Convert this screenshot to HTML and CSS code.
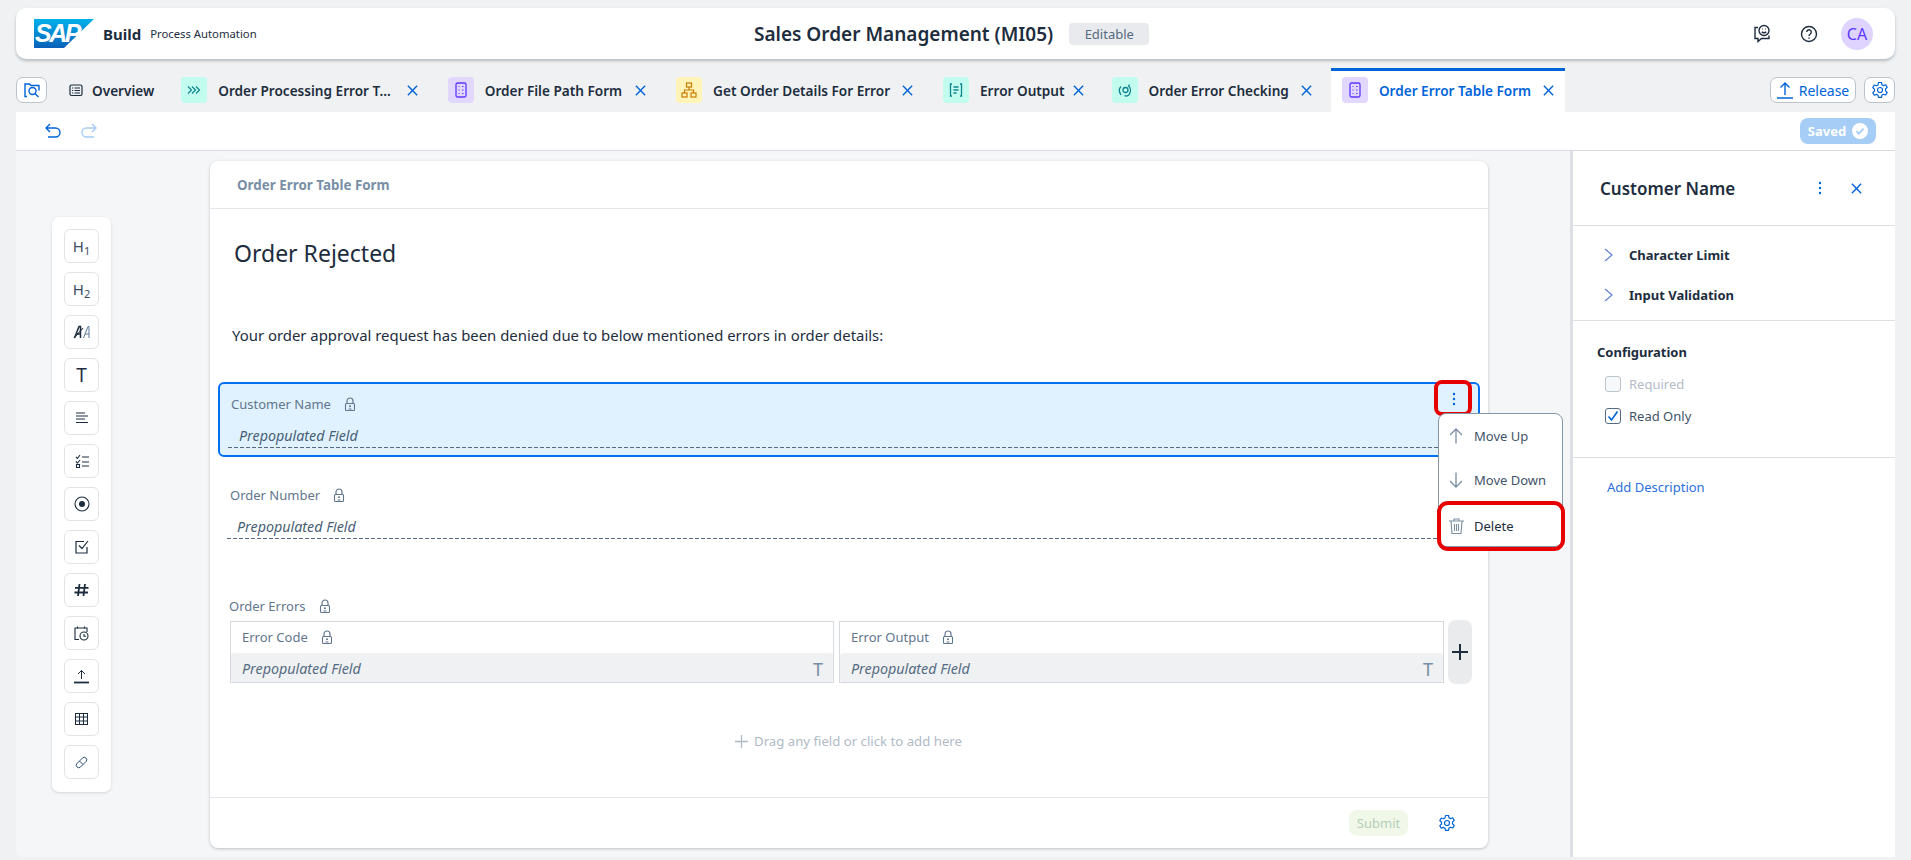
FILE: index.html
```html
<!DOCTYPE html>
<html lang="en">

<head>
    <meta charset="UTF-8">
    <title>Sales Order Management (MI05)</title>
    <link rel="stylesheet" href="styles.css">
</head>

<body>

    <!-- shared icons -->
    <svg class="icon-defs" aria-hidden="true">
        <symbol id="i-close" viewBox="0 0 14 14"><path d="M2 2l10 10M12 2L2 12" fill="none" stroke="currentColor" stroke-width="1.5"/></symbol>
        <symbol id="i-form" viewBox="0 0 26 26"><rect x="8" y="6" width="10" height="14" rx="1.5" fill="none" stroke="#5d36ff" stroke-width="1.3"/><path d="M10.5 9.5h1M14 9.5h1.500M10.500 13h1M14 13h1.500M10.500 16.500h1M14 16.500h1.500" stroke="#5d36ff" stroke-width="1.100"/></symbol>
        <symbol id="i-lock" viewBox="0 0 12 14"><path d="M3 6.500V4a3 3 0 0 1 6 0v2.500" fill="none" stroke="currentColor" stroke-width="1.200"/><rect x="1.500" y="6.500" width="9" height="7" rx="1" fill="none" stroke="currentColor" stroke-width="1.100"/><circle cx="6" cy="9.200" r="1" fill="currentColor"/><path d="M4.500 12h3" stroke="currentColor"/></symbol>
        <symbol id="i-gear" viewBox="0 0 18 18"><path d="M7.500 1.500h3l.5 2.300 1.500.8 2.200-.8 1.500 2.600-1.700 1.600v1.800l1.700 1.600-1.500 2.600-2.200-.8-1.500.8-.5 2.300h-3L7 14.200l-1.500-.8-2.200.8-1.500-2.600 1.700-1.600V8.200L1.800 6.600l1.500-2.600 2.200.8L7 4z" fill="none" stroke="currentColor" stroke-width="1.200" stroke-linejoin="round"/><circle cx="9" cy="9" r="2.500" fill="none" stroke="currentColor" stroke-width="1.200"/></symbol>
        <symbol id="i-dots" viewBox="0 0 4 14"><circle cx="2" cy="2" r="1.200" fill="currentColor"/><circle cx="2" cy="7" r="1.200" fill="currentColor"/><circle cx="2" cy="12" r="1.200" fill="currentColor"/></symbol>
        <symbol id="i-chevron" viewBox="0 0 9 14"><path d="M1 1l7 6-7 6" fill="none" stroke="currentColor" stroke-width="1.100"/></symbol>
    </svg>

    <header class="shell-bar">
        <div class="brand">
            <span class="sap-logo">
                <svg width="60" height="29" viewBox="0 0 60 29">
                    <defs>
                        <linearGradient id="sapBlue" x1="0" y1="0" x2="0" y2="1">
                            <stop offset="0" stop-color="#00b1eb"/>
                            <stop offset="1" stop-color="#0a60b8"/>
                        </linearGradient>
                    </defs>
                    <polygon points="0,0 60,0 30,29 0,29" fill="url(#sapBlue)"/>
                </svg>
                <span class="sap-logo-text">SAP</span>
            </span>
            <strong class="brand-name">Build</strong>
            <span class="brand-sub">Process Automation</span>
        </div>
        <div class="shell-title">
            <span class="project-name">Sales Order Management (MI05)</span>
            <span class="badge">Editable</span>
        </div>
        <div class="shell-actions">
            <svg class="shell-feedback" width="20" height="20" viewBox="0 0 20 20" fill="none" stroke="#1d2d3e" stroke-width="1.400"><path d="M6 3.500H3v11h3v3l3.500-3H17v-3"/><circle cx="12" cy="6.500" r="5"/><path d="M9.800 7.800c1 1.300 3.400 1.300 4.400 0"/><path d="M10.300 5h.6M13.100 5h.6"/></svg>
            <svg class="shell-help" width="18" height="18" viewBox="0 0 18 18" fill="none" stroke="#1d2d3e" stroke-width="1.400"><circle cx="9" cy="9" r="7.500"/><path d="M6.700 7a2.300 2.300 0 1 1 3.500 2c-.9.600-1.200 1-1.200 2"/><path d="M9 12.500v1.300"/></svg>
            <span class="avatar">CA</span>
        </div>
    </header>

    <nav class="tab-bar">
        <button class="btn-square search-btn">
            <svg width="18" height="18" viewBox="0 0 18 18" fill="none" stroke="#0064d9" stroke-width="1.400"><path d="M4 15.500H2V3h4.500l1.500 1.500h8v5"/><circle cx="9.500" cy="10" r="3.500"/><path d="M12 12.500l3.500 3.500"/></svg>
        </button>
        <div class="tab tab-overview">
            <svg width="14" height="14" viewBox="0 0 14 14" fill="none" stroke="#1d2d3e" stroke-width="1.200"><rect x="1" y="2" width="12" height="10.500" rx="1.500"/><path d="M3 5h1.200M5.500 5H11M3 7.500h1.200M5.500 7.500H11M3 10h1.200M5.500 10H11"/></svg>
            <span class="tab-label">Overview</span>
        </div>
        <div class="tab">
            <span class="tab-icon tab-icon-teal"><svg width="14" height="10" viewBox="0 0 14 10" fill="none" stroke="#0f828f" stroke-width="1.200"><path d="M1 1.500L4.500 5 1 8.500M5 1.500L8.500 5 5 8.500M9 1.500L12.500 5 9 8.500"/></svg></span>
            <span class="tab-label tab-label-long">Order Processing Error T...</span>
            <svg class="tab-close"><use href="#i-close"/></svg>
        </div>
        <div class="tab">
            <span class="tab-icon tab-icon-purple"><svg width="26" height="26"><use href="#i-form"/></svg></span>
            <span class="tab-label tab-label-wide">Order File Path Form</span>
            <svg class="tab-close"><use href="#i-close"/></svg>
        </div>
        <div class="tab">
            <span class="tab-icon tab-icon-yellow"><svg width="16" height="16" viewBox="0 0 16 16" fill="none" stroke="#c87b00" stroke-width="1.200"><rect x="5.500" y="1" width="5" height="4"/><rect x="1" y="11" width="5" height="4"/><rect x="10" y="11" width="5" height="4"/><path d="M8 5v3M3.500 11V8h9v3"/></svg></span>
            <span class="tab-label">Get Order Details For Error</span>
            <svg class="tab-close"><use href="#i-close"/></svg>
        </div>
        <div class="tab tab-short">
            <span class="tab-icon tab-icon-teal"><svg width="14" height="14" viewBox="0 0 14 14" fill="none" stroke="#0f828f" stroke-width="1.300"><path d="M3 1H1.500v12H3M11 1h1.500v12H11M4.500 4h5M4.500 7h5M4.500 10h3"/></svg></span>
            <span class="tab-label">Error Output</span>
            <svg class="tab-close"><use href="#i-close"/></svg>
        </div>
        <div class="tab">
            <span class="tab-icon tab-icon-teal"><svg width="14" height="14" viewBox="0 0 14 14" fill="none" stroke="#0f828f" stroke-width="1.300"><path d="M3 3.500C1 5.500 1 9 3 12M11.500 1.500l-1 1.500c2 1.500 2.500 5 1 8-1 2-3.500 2.500-5 1.500"/><circle cx="7.500" cy="7" r="2.500"/></svg></span>
            <span class="tab-label">Order Error Checking</span>
            <svg class="tab-close"><use href="#i-close"/></svg>
        </div>
        <div class="tab tab-active">
            <span class="tab-icon tab-icon-purple"><svg width="26" height="26"><use href="#i-form"/></svg></span>
            <span class="tab-label">Order Error Table Form</span>
            <svg class="tab-close"><use href="#i-close"/></svg>
        </div>
        <div class="tab-actions">
            <button class="btn-release">
                <svg width="16" height="18" viewBox="0 0 16 18" fill="none" stroke="#0064d9" stroke-width="1.400"><path d="M8 14V2M3.500 6.500L8 2l4.500 4.500M0 17h16"/></svg>
                Release
            </button>
            <button class="btn-square gear-btn"><svg width="18" height="18"><use href="#i-gear"/></svg></button>
        </div>
    </nav>

    <div class="toolbar">
        <div class="history">
            <svg width="18" height="16" viewBox="0 0 18 16" fill="none" stroke="#0064d9" stroke-width="1.400"><path d="M6 1L2 5l4 4M2 5h9.500a4.500 4.500 0 0 1 0 9H4"/></svg>
            <svg width="18" height="16" viewBox="0 0 18 16" fill="none" stroke="#a6cdf5" stroke-width="1.400"><path d="M12 1l4 4-4 4M16 5H6.500a4.500 4.500 0 0 0 0 9H14"/></svg>
        </div>
        <span class="saved">Saved
            <svg width="16" height="16" viewBox="0 0 16 16"><circle cx="8" cy="8" r="8" fill="#fff"/><path d="M4.500 8.200l2.400 2.400 4.600-5" fill="none" stroke="#a6cdf5" stroke-width="1.800"/></svg>
        </span>
    </div>

    <main class="workspace">

        <aside class="palette">
            <button class="tool"><span class="tool-h">H<sub>1</sub></span></button>
            <button class="tool"><span class="tool-h">H<sub>2</sub></span></button>
            <button class="tool">
                <svg width="18" height="14" viewBox="0 0 18 14" fill="none" stroke="#1d2d3e"><path d="M1.500 13L6 1.500h1.500V13M3 9h5" stroke-width="1.500"/><path d="M10.500 13L15 1.500h1V13M12 9h4" stroke="#5a7a9a"/><path d="M1 13L10 3" stroke-width="1.100"/></svg>
            </button>
            <button class="tool"><span class="tool-t">T</span></button>
            <button class="tool">
                <svg width="14" height="12" viewBox="0 0 14 12" stroke="#1d2d3e" stroke-width="1.100"><path d="M1 1h9M1 4h12M1 7h9M1 10.500h12"/></svg>
            </button>
            <button class="tool">
                <svg width="14" height="14" viewBox="0 0 14 14" fill="none" stroke="#1d2d3e" stroke-width="1.100"><path d="M1 3l1.500 1.500L5 1M1 7.500l1.500 1.500L5 6"/><rect x="1.500" y="10.500" width="3" height="3"/><path d="M7 3h7M7 8h7M7 12h7"/></svg>
            </button>
            <button class="tool">
                <svg width="16" height="16" viewBox="0 0 16 16"><circle cx="8" cy="8" r="7" fill="none" stroke="#1d2d3e" stroke-width="1.100"/><circle cx="8" cy="8" r="3" fill="#1d2d3e"/></svg>
            </button>
            <button class="tool">
                <svg width="14" height="14" viewBox="0 0 14 14" fill="none" stroke="#1d2d3e" stroke-width="1.200"><path d="M9 1.500H1V13h11V7"/><path d="M4 5.500l3 3L13 1"/></svg>
            </button>
            <button class="tool">
                <svg width="15" height="14" viewBox="0 0 15 14" stroke="#1d2d3e" stroke-width="1.800"><path d="M5.500 1L4 13M11 1L9.500 13M1 4.800h13.500M.5 9.500H14"/></svg>
            </button>
            <button class="tool">
                <svg width="15" height="15" viewBox="0 0 15 15" fill="none" stroke="#1d2d3e" stroke-width="1.100"><path d="M5 13.500H1V2h12v4M1 2h12" /><path d="M3.500 .5v2M10.500 .5v2"/><circle cx="10" cy="10" r="4"/><path d="M10 8v2.200h2"/></svg>
            </button>
            <button class="tool">
                <svg width="15" height="15" viewBox="0 0 15 15" fill="none" stroke="#1d2d3e"><path d="M7.500 10V1.500M4 5l3.500-3.500L11 5" stroke-width="1"/><path d="M0 13.500h15" stroke-width="1.800"/></svg>
            </button>
            <button class="tool">
                <svg width="13" height="12" viewBox="0 0 13 12" fill="none" stroke="#1d2d3e"><rect x=".5" y=".5" width="12" height="11"/><path d="M.5 4h12M.5 8h12M4.500 .5v11M8.500 .5v11"/></svg>
            </button>
            <button class="tool">
                <svg width="13" height="13" viewBox="0 0 13 13" fill="none" stroke="#33507a"><path d="M2 7.500L7.500 2a2.100 2.100 0 0 1 3.500 3.500L5.500 11A2.100 2.100 0 0 1 2 7.500z"/><path d="M4.500 5l3.500 3.500"/></svg>
            </button>
        </aside>

        <section class="form-card">
            <div class="form-card-head">Order Error Table Form</div>
            <div class="form-body">
                <h2 class="form-heading">Order Rejected</h2>
                <p class="form-text">Your order approval request has been denied due to below mentioned errors in order details:</p>

                <div class="field field-selected">
                    <div class="field-label">Customer Name <svg class="lock"><use href="#i-lock"/></svg></div>
                    <div class="field-value">Prepopulated Field</div>
                    <!-- annotated more menu -->
                    <button class="field-more"><svg width="4" height="14"><use href="#i-dots"/></svg></button>
                    <span class="mark mark-more"></span>
                    <div class="field-menu">
                        <div class="menu-item">
                            <svg width="14" height="16" viewBox="0 0 14 16" fill="none" stroke="#7b8fa5" stroke-width="1.300"><path d="M7 15.500V1M1 7l6-6 6 6"/></svg>
                            Move Up
                        </div>
                        <div class="menu-item">
                            <svg width="14" height="16" viewBox="0 0 14 16" fill="none" stroke="#7b8fa5" stroke-width="1.300"><path d="M7 .5V15M1 9l6 6 6-6"/></svg>
                            Move Down
                        </div>
                        <div class="menu-item menu-item-delete">
                            <svg width="15" height="16" viewBox="0 0 15 16" fill="none" stroke="#7b8fa5" stroke-width="1.100"><path d="M0 3h15M5 3V1h5v2M2 3l1 12.500h9L13 3M5.500 6v7M7.500 6v7M9.500 6v7"/></svg>
                            Delete
                        </div>
                        <span class="mark mark-delete"></span>
                    </div>
                </div>

                <div class="field field-plain">
                    <div class="field-label">Order Number <svg class="lock"><use href="#i-lock"/></svg></div>
                    <div class="field-value">Prepopulated Field</div>
                </div>

                <div class="table-field">
                    <div class="field-label">Order Errors <svg class="lock"><use href="#i-lock"/></svg></div>
                    <div class="table-row">
                        <div class="table-col">
                            <div class="col-head">Error Code <svg class="lock"><use href="#i-lock"/></svg></div>
                            <div class="col-value"><em>Prepopulated Field</em><span class="col-type">T</span></div>
                        </div>
                        <div class="table-col">
                            <div class="col-head">Error Output <svg class="lock"><use href="#i-lock"/></svg></div>
                            <div class="col-value"><em>Prepopulated Field</em><span class="col-type">T</span></div>
                        </div>
                        <button class="col-add">
                            <svg width="16" height="16" viewBox="0 0 16 16" stroke="#1d2d3e" stroke-width="2"><path d="M8 0v16M0 8h16"/></svg>
                        </button>
                    </div>
                </div>

                <div class="drop-hint">
                    <svg width="13" height="13" viewBox="0 0 13 13" stroke="#b0bac6" stroke-width="1.300"><path d="M6.500 0v13M0 6.500h13"/></svg>
                    Drag any field or click to add here
                </div>
            </div>
            <div class="form-card-foot">
                <button class="btn-submit">Submit</button>
                <svg class="foot-gear" width="18" height="18"><use href="#i-gear"/></svg>
            </div>
        </section>

        <aside class="props">
            <div class="props-head">
                <h3 class="props-title">Customer Name</h3>
                <svg class="props-dots" width="4" height="14"><use href="#i-dots"/></svg>
                <svg class="props-close"><use href="#i-close"/></svg>
            </div>
            <div class="props-group">
                <div class="props-row"><svg class="chev"><use href="#i-chevron"/></svg>Character Limit</div>
                <div class="props-row"><svg class="chev"><use href="#i-chevron"/></svg>Input Validation</div>
            </div>
            <div class="props-config">
                <div class="config-title">Configuration</div>
                <label class="check check-off"><span class="box"></span>Required</label>
                <label class="check">
                    <span class="box box-on"><svg width="12" height="12" viewBox="0 0 12 12" fill="none" stroke="#0064d9" stroke-width="1.600"><path d="M1.500 6.500l3 3.500 6-8.500"/></svg></span>
                    Read Only
                </label>
            </div>
            <a class="add-desc">Add Description</a>
        </aside>

    </main>

</body>

</html>
```

FILE: styles.css
```css
* {
    box-sizing: border-box;
}

html,
body {
    height: 860px;
    overflow: hidden;
}

body {
    margin: 0;
    background: #eff1f2;
    color: #1d2d3e;
    font-family: "Noto Sans", Arial, sans-serif;
    font-size: 14px;
}

button {
    font-family: inherit;
    padding: 0;
    cursor: pointer;
}

.icon-defs {
    display: none;
}

/* top bar */
.shell-bar {
    display: flex;
    align-items: center;
    justify-content: space-between;
    height: 51px;
    margin: 8px 16px 0;
    padding: 0 22px 0 18px;
    background: #fff;
    border-radius: 10px;
    box-shadow: 0 2px 3px rgba(50, 70, 90, 0.3);
    position: relative;
}

.brand {
    display: flex;
    align-items: center;
}

.sap-logo {
    position: relative;
    width: 60px;
    height: 29px;
    margin-right: 9px;
}

.sap-logo svg {
    display: block;
}

.sap-logo-text {
    position: absolute;
    left: 1px;
    top: 0;
    color: #fff;
    font: italic bold 25px/28px "Liberation Sans", sans-serif;
    letter-spacing: -2.500px;
}

.brand-name {
    font-size: 15px;
    font-weight: 700;
    margin-right: 9px;
}

.brand-sub {
    font-size: 11.300px;
}

.shell-title {
    position: absolute;
    left: 738px;
    top: 0;
    height: 51px;
    display: flex;
    align-items: center;
}

.project-name {
    font-size: 19px;
    font-weight: 600;
    margin-right: 16px;
}

.badge {
    display: block;
    width: 80px;
    height: 22px;
    line-height: 22px;
    text-align: center;
    border-radius: 4px;
    background: #e8eaed;
    color: #556b82;
    font-size: 13px;
}

.shell-actions {
    display: flex;
    align-items: center;
}

.shell-help {
    margin-left: 28px;
    margin-right: 23px;
}

.avatar {
    width: 32px;
    height: 32px;
    border-radius: 50%;
    background: #dfd4ff;
    color: #5d36ff;
    text-align: center;
    line-height: 32px;
    font-size: 16px;
}

/* tabs */
.tab-bar {
    display: flex;
    align-items: flex-end;
    height: 53px;
    margin: 0 16px;
}

.btn-square {
    width: 31px;
    height: 26px;
    margin-bottom: 9px;
    background: #fff;
    border: 1px solid #bcc3ca;
    border-radius: 7px;
    display: flex;
    align-items: center;
    justify-content: center;
}

.search-btn {
    margin-right: 22px;
}

.gear-btn {
    color: #0064d9;
    margin-left: 8px;
}

.tab {
    display: flex;
    align-items: center;
    height: 44px;
    padding: 0 18px 3px 11px;
    font-weight: 600;
    font-size: 13.600px;
    white-space: nowrap;
    border-top: 3px solid transparent;
}

.tab-overview {
    padding: 0 16px 3px 0;
}

.tab-overview svg {
    margin-right: 9px;
}

.tab-icon {
    width: 26px;
    height: 26px;
    margin-right: 11px;
    border-radius: 4px;
    display: flex;
    align-items: center;
    justify-content: center;
}

.tab-icon-teal {
    background: #c2fcee;
}

.tab-icon-purple {
    background: #e2d8ff;
}

.tab-icon-yellow {
    background: #fff3b8;
}

.tab-close {
    width: 13px;
    height: 13px;
    margin-left: 11px;
    color: #0064d9;
}

.tab-label-long + .tab-close {
    margin-left: 15px;
}

.tab-label-wide + .tab-close {
    margin-left: 12px;
}

.tab-short {
    padding-right: 16px;
}

.tab-short .tab-close {
    margin-left: 7px;
}

.tab-active {
    background: #fff;
    border-top-color: #0064d9;
    color: #0064d9;
    padding-right: 10px;
}

.tab-actions {
    margin-left: auto;
    display: flex;
}

.btn-release {
    width: 86px;
    height: 26px;
    margin-bottom: 9px;
    background: #fff;
    border: 1px solid #bcc3ca;
    border-radius: 7px;
    color: #0064d9;
    font-size: 14px;
    display: flex;
    align-items: center;
    justify-content: center;
    gap: 6px;
}

/* undo row */
.toolbar {
    display: flex;
    align-items: center;
    justify-content: space-between;
    height: 39px;
    margin: 0 16px;
    padding: 0 19px 0 28px;
    background: #fff;
    border-bottom: 1px solid #d9dde1;
}

.history {
    display: flex;
    gap: 18px;
}

.saved {
    display: flex;
    align-items: center;
    justify-content: center;
    gap: 6px;
    width: 76px;
    height: 26px;
    border-radius: 8px;
    background: #a6cdf5;
    color: #fff;
    font-size: 13px;
    font-weight: 700;
}

/* main area */
.workspace {
    display: flex;
    align-items: flex-start;
    height: 706px;
    margin: 0 16px;
    background: #f5f6f7;
    border-radius: 0 0 0 6px;
}

.palette {
    display: flex;
    flex-direction: column;
    gap: 9px;
    width: 59px;
    margin: 66px 0 0 36px;
    padding: 12px 12px 13px;
    background: #fff;
    border-radius: 7px;
    box-shadow: 0 1px 3px rgba(50, 70, 90, 0.18);
}

.tool {
    width: 35px;
    height: 34px;
    background: #fff;
    border: 1px solid #e1e4e7;
    border-radius: 6px;
    color: #1d2d3e;
    display: flex;
    align-items: center;
    justify-content: center;
}

.tool-h {
    font-size: 15px;
    color: #3a4c5f;
}

.tool-h sub {
    font-size: 11px;
    vertical-align: -3px;
    line-height: 0;
}

.tool-t {
    font-size: 19px;
    line-height: 1;
}

/* form canvas */
.form-card {
    width: 1279px;
    height: 687px;
    margin: 10px 0 0 99px;
    background: #fff;
    border-radius: 8px;
    box-shadow: 0 1px 3px rgba(50, 70, 90, 0.3);
    display: flex;
    flex-direction: column;
}

.form-card-head {
    height: 48px;
    line-height: 49px;
    padding-left: 27px;
    border-bottom: 1px solid #e5e7ea;
    color: #788fa6;
    font-size: 13.400px;
    font-weight: 700;
}

.form-body {
    flex: 1;
    padding: 0 8px;
    position: relative;
}

.form-heading {
    margin: 27px 0 0 16px;
    font-size: 23px;
    font-weight: 400;
    line-height: 34px;
}

.form-text {
    margin: 55px 0 0 14px;
    font-size: 14.900px;
    line-height: 20px;
}

.field {
    position: relative;
}

.field-label {
    display: flex;
    align-items: center;
    gap: 13px;
    color: #62768c;
    font-size: 13px;
    line-height: 18px;
}

.lock {
    width: 12px;
    height: 14px;
    color: #62768c;
}

.field-selected {
    height: 75px;
    margin-top: 37px;
    padding: 11px 10px 0 11px;
    background: #e0f2ff;
    border: 2px solid #0070f2;
    border-radius: 6px;
}

.field-plain {
    height: 52px;
    margin-top: 29px;
    padding: 0 10px;
}

.field-plain .field-label {
    margin-left: 2px;
}

.field-value {
    margin: 12px 0 0 -3px;
    padding: 0 0 2px 11px;
    height: 23px;
    line-height: 22px;
    font-size: 14.300px;
    font-style: italic;
    color: #475e75;
    /* long dashes, border: dashed comes out as dots at 1px */
    background: repeating-linear-gradient(90deg, #556b82 0 4px, transparent 4px 6px) left bottom / 100% 1px no-repeat;
}

.field-plain .field-value {
    margin: 12px -12px 0 -1px;
    padding-left: 10px;
}

.field-more {
    position: absolute;
    right: 11px;
    top: 3px;
    width: 26px;
    height: 28px;
    border: none;
    background: none;
    color: #0064d9;
}

/* red call-outs from the screenshot */
.mark {
    position: absolute;
    border: 4px solid #e60000;
    border-radius: 8px;
    pointer-events: none;
}

.mark-more {
    right: 6px;
    top: -4px;
    width: 38px;
    height: 36px;
}

.mark-delete {
    left: -2px;
    top: 87px;
    width: 128px;
    height: 50px;
    border-radius: 11px;
}

.field-menu {
    position: absolute;
    left: 1218px;
    top: 29px;
    width: 125px;
    height: 134px;
    background: #fff;
    border: 1px solid #8696a9;
    border-radius: 8px;
    z-index: 2;
}

.menu-item {
    display: flex;
    align-items: center;
    gap: 11px;
    height: 44px;
    padding-left: 10px;
    font-size: 13px;
    color: #3f5368;
}

.menu-item-delete {
    color: #1d2d3e;
    margin-top: 2px;
    gap: 10px;
}

.table-field {
    margin-top: 59px;
    padding-left: 12px;
}

.table-field > .field-label {
    margin-left: -1px;
}

.table-row {
    display: flex;
    gap: 5px;
    margin-top: 6px;
}

.table-col {
    flex: none;
    width: 604px;
    height: 62px;
    border: 1px solid #d5d8dc;
    display: flex;
    flex-direction: column;
}

.table-col + .table-col {
    width: 605px;
}

.col-head {
    display: flex;
    align-items: center;
    gap: 13px;
    height: 31px;
    padding: 0 0 2px 11px;
    font-size: 13px;
    color: #62768c;
}

.col-value {
    flex: 1;
    display: flex;
    align-items: center;
    justify-content: space-between;
    padding: 2px 10px 0 11px;
    background: #eff1f2;
    border-radius: 3px;
    font-size: 14.300px;
    color: #556b82;
}

.col-type {
    font-size: 18px;
    line-height: 1;
    color: #788fa6;
}

.col-add {
    width: 24px;
    height: 64px;
    margin: -1px 0 0 -1px;
    border: none;
    border-radius: 8px;
    background: #e9ebed;
    display: flex;
    align-items: center;
    justify-content: center;
}

.drop-hint {
    display: flex;
    align-items: center;
    justify-content: center;
    gap: 6px;
    margin-top: 47px;
    margin-left: -1px;
    height: 20px;
    color: #b0bac6;
    font-size: 13.200px;
}

.form-card-foot {
    display: flex;
    align-items: center;
    justify-content: flex-end;
    height: 51px;
    padding-right: 32px;
    border-top: 1px solid #e5e7ea;
}

.btn-submit {
    width: 59px;
    height: 26px;
    border: none;
    border-radius: 8px;
    background: #f1f8ea;
    color: #b5d0b5;
    font-size: 13px;
}

.foot-gear {
    margin-left: 30px;
    color: #0064d9;
}

/* right panel */
.props {
    width: 325px;
    height: 100%;
    margin-left: 82px;
    background: #fff;
    border-left: 3px solid #dcdfe3;
    flex: none;
}

.props-head {
    display: flex;
    align-items: center;
    height: 75px;
    padding-left: 27px;
    border-bottom: 1px solid #dcdfe3;
}

.props-title {
    margin: 0;
    width: 218px;
    font-size: 17px;
    font-weight: 600;
}

.props-dots {
    color: #0064d9;
}

.props-close {
    width: 13px;
    height: 13px;
    margin-left: 28px;
    color: #0064d9;
}

.props-group {
    height: 95px;
    padding-top: 9px;
    border-bottom: 1px solid #dcdfe3;
}

.props-row {
    display: flex;
    align-items: center;
    height: 40px;
    padding-left: 31px;
    font-size: 13px;
    font-weight: 700;
}

.chev {
    width: 9px;
    height: 14px;
    margin-right: 16px;
    color: #5d7bdc;
}

.props-config {
    height: 137px;
    padding: 22px 0 0 24px;
    border-bottom: 1px solid #dcdfe3;
}

.config-title {
    font-size: 13px;
    font-weight: 700;
    line-height: 18px;
    margin-bottom: 7px;
}

.check {
    display: flex;
    align-items: center;
    height: 32px;
    padding-left: 8px;
    font-size: 13px;
    color: #3f5368;
}

.check-off {
    color: #b4bcc6;
}

.box {
    width: 16px;
    height: 16px;
    margin-right: 8px;
    border: 1px solid #bcc4cc;
    border-radius: 3px;
    background: #f7f8f9;
    display: flex;
    align-items: center;
    justify-content: center;
}

.box-on {
    background: #fff;
    border-color: #556b82;
}

.add-desc {
    display: block;
    margin: 20px 0 0 34px;
    color: #2a6fdb;
    font-size: 13px;
    line-height: 18px;
}
```
